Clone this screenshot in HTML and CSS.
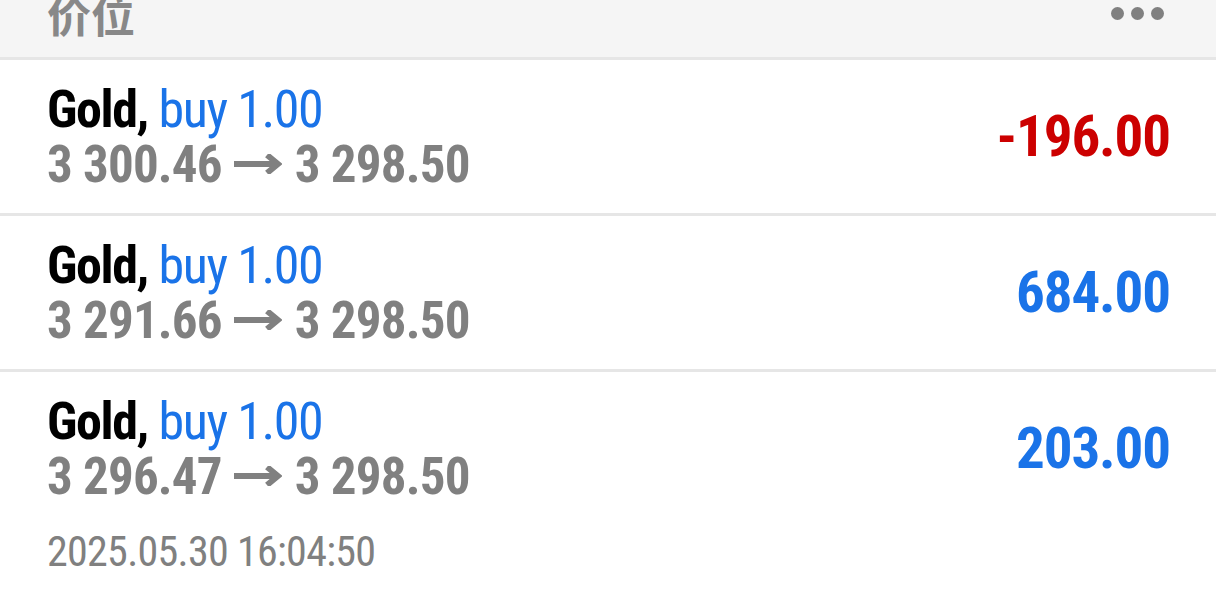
FILE: index.html
```html
<!DOCTYPE html>
<html lang="zh">
<head>
<meta charset="utf-8">
<link rel="stylesheet" href="styles.css">
</head>
<body>
<div class="header">
  <span class="header-title">价位</span>
  <span class="dots"><i></i><i></i><i></i></span>
</div>
<div class="list">
  <div class="row">
    <div class="main">
      <div class="info">
        <div class="line1"><span class="sym">Gold,</span> <span class="side">buy 1.00</span></div>
        <div class="line2">3 300.46<svg class="arrow" viewBox="0 0 48 20" width="48" height="20"><path d="M0 10H44M33 1L44 10L33 19" fill="none" stroke="#808080" stroke-width="6"/></svg>3 298.50</div>
      </div>
      <div class="profit neg">-196.00</div>
    </div>
  </div>
  <div class="row">
    <div class="main">
      <div class="info">
        <div class="line1"><span class="sym">Gold,</span> <span class="side">buy 1.00</span></div>
        <div class="line2">3 291.66<svg class="arrow" viewBox="0 0 48 20" width="48" height="20"><path d="M0 10H44M33 1L44 10L33 19" fill="none" stroke="#808080" stroke-width="6"/></svg>3 298.50</div>
      </div>
      <div class="profit pos">684.00</div>
    </div>
  </div>
  <div class="row">
    <div class="main">
      <div class="info">
        <div class="line1"><span class="sym">Gold,</span> <span class="side">buy 1.00</span></div>
        <div class="line2">3 296.47<svg class="arrow" viewBox="0 0 48 20" width="48" height="20"><path d="M0 10H44M33 1L44 10L33 19" fill="none" stroke="#808080" stroke-width="6"/></svg>3 298.50</div>
      </div>
      <div class="profit pos">203.00</div>
    </div>
    <div class="date">2025.05.30 16:04:50</div>
  </div>
</div>
</body>
</html>
```
FILE: styles.css
```css
html, body {
  margin: 0;
  padding: 0;
  background: #ffffff;
}
body {
  font-family: Roboto, "Noto Sans CJK SC", sans-serif;
  font-stretch: 75%;
  overflow: hidden;
  height: 592px;
}
.header {
  height: 57px;
  background: #f5f5f5;
  border-bottom: 3px solid #e6e6e6;
  display: flex;
  justify-content: space-between;
  align-items: flex-end;
  padding: 0 52px 0 47px;
  overflow: hidden;
}
.header-title {
  font-family: "Noto Sans CJK SC", sans-serif;
  font-weight: 700;
  font-size: 44px;
  line-height: 44px;
  color: #888888;
  margin-bottom: 21px;
}
.dots {
  display: flex;
  gap: 7px;
  align-self: flex-start;
  margin-top: 7px;
}
.dots i {
  display: block;
  width: 13px;
  height: 13px;
  border-radius: 50%;
  background: #808080;
}
.row {
  border-bottom: 3px solid #e6e6e6;
  padding: 0 46px 0 47px;
}
.row:last-child {
  border-bottom: none;
}
.main {
  height: 153px;
  display: flex;
  justify-content: space-between;
  align-items: center;
}
.info {
  display: flex;
  flex-direction: column;
}
.line1 {
  font-size: 52px;
  line-height: 55px;
  letter-spacing: -1.4px;
  white-space: nowrap;
}
.sym {
  font-weight: 700;
  color: #000000;
}
.side {
  color: #1a73e8;
}
.line2 {
  font-size: 51px;
  line-height: 55px;
  font-weight: 700;
  color: #808080;
  letter-spacing: -0.8px;
  white-space: nowrap;
}
.arrow {
  display: inline-block;
  vertical-align: 8px;
  margin: 0 13px 0 12px;
}
.profit {
  font-size: 57px;
  font-weight: 700;
  line-height: 60px;
  letter-spacing: -1.1px;
}
.neg { color: #cc0000; }
.pos { color: #1a73e8; }
.date {
  font-size: 42px;
  line-height: 50px;
  color: #808080;
  letter-spacing: -0.7px;
  margin-top: 2px;
}
```
